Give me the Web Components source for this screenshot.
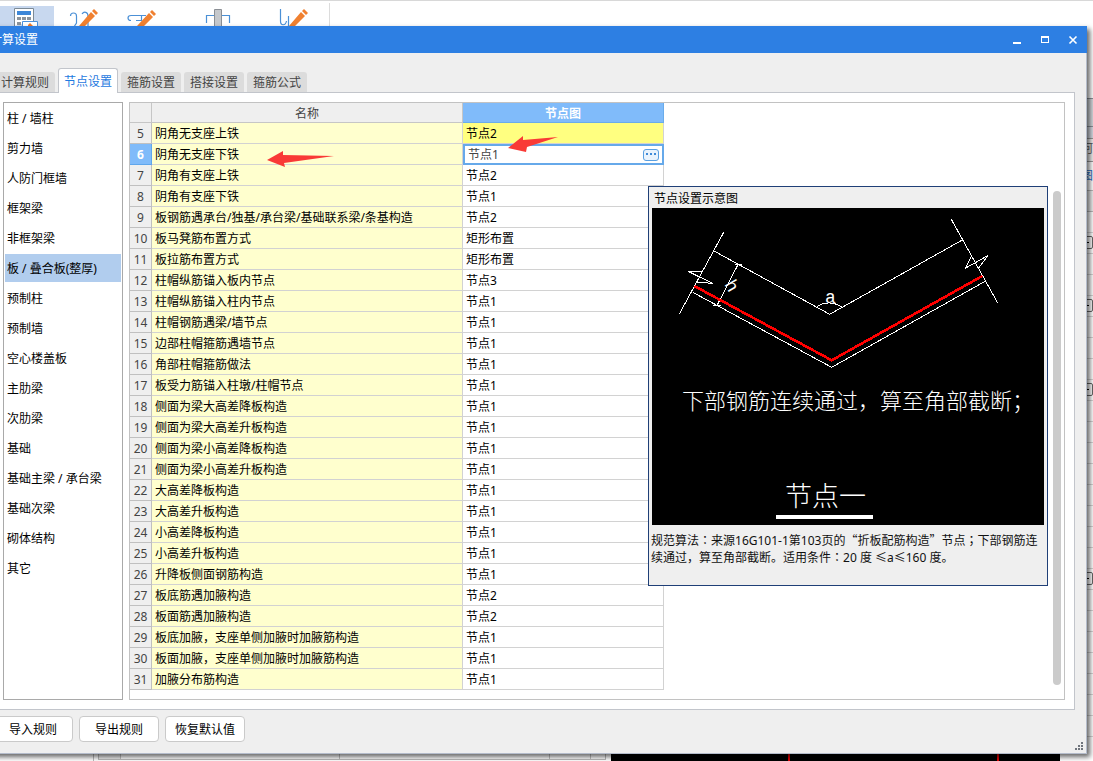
<!DOCTYPE html>
<html lang="zh-CN">
<head>
<meta charset="utf-8">
<title>计算设置</title>
<style>
  body { margin: 0; font: 12px/18px "Noto Sans", "Noto Sans CJK SC", sans-serif; color: #000; overflow: hidden; }
</style>
</head>
<body>
<app-desktop></app-desktop>
<script>
const define = (name, html, setup) => {
  const tpl = document.createElement('template');
  tpl.innerHTML = html;
  customElements.define(name, class extends HTMLElement {
    connectedCallback() {
      if (this.shadowRoot) return;
      const root = this.attachShadow({ mode: 'open' });
      root.append(tpl.content.cloneNode(true));
      if (setup) setup(this, root);
    }
  });
};

/* Ribbon of the main application */
define('app-ribbon', `
<style>
  :host { display: flex; height: 25px; border-top: 1px solid #d8d8d8; background: #fff; }
  svg { display: block; width: 330px; height: 25px; }
</style>
<svg viewBox="0 1 330 25" fill="none" aria-hidden="true">
  <path d="M0 6h54v20H0z" fill="#c8d8ef"/>
  <path d="M14.500 26V8.500H33.500V21" fill="#fff" stroke="#7c8a96"/>
  <path d="M17 11h14v4H17z" fill="#3d87d8"/>
  <path d="M17 17h4v3h-4zM22 17h4v3h-4zM27 17h4v3h-4zM17 22h4v3h-4z" fill="#8c949c"/>
  <path d="M22.500 26v-4.500h15V26" fill="#fff" stroke="#4a90dc"/>
  <path d="M28 25l2-2 3 3h-5z" fill="#f07a28"/>
  <path d="M70.500 16c0-4 6-4 6 0v7l-2 3M82 14c2-3 6-2 6 2v10M140 15.500h-9c-4 0-4 5 0 5M137 15.500h9M141.500 16v5M136 20.500h6M206.500 23v-7.500h23V23M280.500 9v12c0 5 5 5 6 0M288.500 16v10" stroke="#4b90d6" stroke-width="1.200"/>
  <path d="M214.500 26V9.500h7V26" fill="#c5c8cc" stroke="#8b8f95"/>
  <g fill="#f08030"><path d="M79 26l12-14 4 4-10 10zM92 11l2-2 4 4-2 2z"/><path d="M137 26l12-13 4 4-9 9zM150 12l2-2 4 4-2 2zM289 26l12-14 4 4-10 10zM302 11l2-2 4 4-2 2z"/></g>
  <path d="M329.500 3v23" stroke="#dcdcdc"/>
</svg>`);

/* Property grid that shows past the dialog's right edge */
define('side-grid', `
<style>
  :host { display: block; overflow: hidden; background: #fff; }
  .band { height: 27px; margin-top: 72px; background: #d4d9dd; border: solid #8d939b; border-width: 1px 0; }
  .sub { height: 11px; background: #d6dae2; }
  .head { height: 22px; border: solid #999; border-width: 1px 0 1px; background: #eee; color: #666; direction: rtl; white-space: nowrap; line-height: 20px; }
  .blue { color: #2a6fc9; height: 28px; line-height: 28px; direction: rtl; white-space: nowrap; border-bottom: 1px solid #bbb; }
  .gray { height: 20px; background: #efefef; border-bottom: 1px solid #bbb; }
  .lines { height: 570px; background: repeating-linear-gradient(#fff 0 20px, #d5d5d5 20px 21px); position: relative; }
  i { position: absolute; right: 0; width: 6px; height: 11px; border: 1px solid #666; border-radius: 2px; background: #fff linear-gradient(#000, #000) 0 5px / 3px 1px no-repeat; }
</style>
<div class="band"></div><div class="sub"></div>
<div class="head">河</div><div class="blue">图</div><div class="gray"></div>
<div class="lines"><i style="top:24px"></i><i style="top:87px"></i><i style="top:171px"></i><i style="top:360px"></i></div>`);

/* Strip of the main window under the dialog */
define('bottom-strip', `
<style>
  :host { display: flex; height: 14px; background: #fff; overflow: hidden; }
  .edge { width: 93px; border-right: 1px solid #bbb; margin-right: 4px; flex: none; }
  .grid { flex: 0 0 508px; box-sizing: border-box; height: 13px; display: flex; border: solid #bbb; border-width: 0 1px 1px; }
  .grid div { border-right: 1px solid #c4c4c4; box-sizing: border-box; }
  .n { width: 22px; background: #eee; } .name { width: 219px; } .val { width: 210px; } .x { width: 41px; }
  .view { flex: 1; margin: 0 33px 0 5px; background: linear-gradient(#e00000, #e00000) 177px 0 / 2px 100% no-repeat, linear-gradient(#e00000, #e00000) 386px 0 / 2px 100% no-repeat, #000; }
</style>
<div class="edge"></div><div class="grid"><div class="n"></div><div class="name"></div><div class="val"></div><div class="x"></div></div><div class="view"></div>`);

define('title-bar', `
<style>
  :host { display: flex; align-items: center; height: 27px; flex: none; background: #2d7fe3; color: #fff; padding-left: 4px; }
  span { flex: 1; }
  button { width: 28px; height: 27px; padding: 0; border: 0; background: none; color: #fff; }
  svg { display: block; margin: auto; }
</style>
<span><slot></slot></span>
<button aria-label="最小化"><svg width="10" height="10"><path d="M1 7h8v2H1z" fill="currentColor"/></svg></button>
<button aria-label="最大化"><svg width="10" height="10"><path d="M1 1h8v7H1zM2 3v4h6V3z" fill="currentColor" fill-rule="evenodd"/></svg></button>
<button aria-label="关闭"><svg width="10" height="10"><path d="M1.500 1.500l7 7m0-7l-7 7" stroke="currentColor" stroke-width="1.600"/></svg></button>`);

define('tab-strip', `
<style>
  :host { display: flex; align-items: flex-end; gap: 3px; height: 39px; flex: none; padding-left: 9px; position: relative; }
  button { box-sizing: border-box; width: 60px; height: 20px; padding: 1px 0 0; border: 0; border-radius: 3px 3px 0 0; background: #dcdcdc; color: #444; font: inherit; line-height: 19px; white-space: nowrap; }
  button[aria-selected=true] { height: 25px; background: #fff; color: #1f7ae0; border: 1px solid #c2c5cb; border-bottom: 0; margin-bottom: -1px; }
</style>`, (host, root) => {
  host.setAttribute('role', 'tablist');
  host.getAttribute('items').split(',').forEach((t, i) => {
    const b = document.createElement('button');
    b.setAttribute('role', 'tab');
    b.setAttribute('aria-selected', i === 1);
    b.textContent = t;
    root.append(b);
  });
});

define('category-list', `
<style>
  :host { display: block; box-sizing: border-box; width: 120px; flex: none; border: 1px solid #a9a9a9; background: #fff; padding: 1px; }
  ul { margin: 0; padding: 0; list-style: none; display: grid; gap: 2px; }
  li { height: 28px; line-height: 30px; padding-left: 2px; white-space: nowrap; }
  .on { background: #b1cdee; }
</style><ul></ul>`, (host, root) => {
  const ul = root.querySelector('ul');
  host.getAttribute('items').split(',').forEach((t, i) => {
    const li = document.createElement('li');
    li.textContent = t;
    if (i === 5) li.className = 'on';
    ul.append(li);
  });
});

define('node-table', `
<style>
  :host { display: block; }
  table { border-collapse: separate; border-spacing: 0; table-layout: fixed; width: 534px; }
  th, td { box-sizing: border-box; padding: 2px 0 0; height: 21px; line-height: 18px; border: solid #d2d2d2; border-width: 0 1px 1px 0; text-align: left; font-weight: 400; white-space: nowrap; }
  thead th { height: 20px; line-height: 17px; background: #efefef; text-align: center; color: #444; border-color: #c6c6c6; }
  thead .on { background: #80bbfa; color: #fff; font-weight: 700; border-color: #6aaceb; }
  tbody th { background: #efefef; text-align: center; color: #444; border-color: #c0c0c0; }
  tbody td { padding-left: 3px; }
  .name { background: #ffffce; }
  .hot { background: #ffff80; }
  tbody .cur { background: #80bbfa; color: #fff; font-weight: 700; border-color: #5fa6ec; }
  tbody td.edit { padding: 0; border: 0; }
  .box { display: flex; align-items: center; box-sizing: border-box; height: 21px; border: 2px solid #66a9ea; background: #fff; padding: 0 3px; }
  input { flex: 1; min-width: 0; height: 17px; box-sizing: border-box; padding: 0; border: 0; outline: 0; font: inherit; color: #444; background: none; }
  button { display: block; width: 16px; height: 12px; padding: 0; border: 1px solid #5a9fe0; border-radius: 3px; background: #e9f3fd; }
  svg { display: block; margin: auto; }
</style>
<table><colgroup><col style="width:22px"><col style="width:311px"><col style="width:201px"></colgroup>
<thead><tr><th></th><th>名称</th><th class="on">节点图</th></tr></thead><tbody></tbody></table>`, (host, root) => {
  const rows = [['阴角无支座上铁','节点2'],['阴角无支座下铁','节点1'],['阴角有支座上铁','节点2'],['阴角有支座下铁','节点1'],
    ['板钢筋遇承台/独基/承台梁/基础联系梁/条基构造','节点2'],['板马凳筋布置方式','矩形布置'],['板拉筋布置方式','矩形布置'],
    ['柱帽纵筋锚入板内节点','节点3'],['柱帽纵筋锚入柱内节点','节点1'],['柱帽钢筋遇梁/墙节点','节点1'],['边部柱帽箍筋遇墙节点','节点1'],
    ['角部柱帽箍筋做法','节点1'],['板受力筋锚入柱墩/柱帽节点','节点1'],['侧面为梁大高差降板构造','节点1'],['侧面为梁大高差升板构造','节点1'],
    ['侧面为梁小高差降板构造','节点1'],['侧面为梁小高差升板构造','节点1'],['大高差降板构造','节点1'],['大高差升板构造','节点1'],
    ['小高差降板构造','节点1'],['小高差升板构造','节点1'],['升降板侧面钢筋构造','节点1'],['板底筋遇加腋构造','节点2'],['板面筋遇加腋构造','节点2'],
    ['板底加腋，支座单侧加腋时加腋筋构造','节点1'],['板面加腋，支座单侧加腋时加腋筋构造','节点1'],['加腋分布筋构造','节点1']];
  root.querySelector('tbody').innerHTML = rows.map(([n, v], i) => {
    const cur = i === 1;
    const cell = cur
      ? `<td class="edit"><div class="box"><input aria-label="${n}" value="${v}"><button aria-label="选择节点图"><svg width="12" height="3"><path d="M1 0h2v2H1zM5 0h2v2H5zM9 0h2v2H9z" fill="#3f8ad8"/></svg></button></div></td>`
      : `<td${i ? '' : ' class="hot"'}>${v}</td>`;
    return `<tr><th${cur ? ' class="cur"' : ''}>${i + 5}</th><td class="name">${n}</td>${cell}</tr>`;
  }).join('');
});

/* Node diagram popup */
define('node-preview', `
<style>
  :host { display: block; box-sizing: border-box; width: 400px; height: 400px; border: 1px solid #1f3f77; background: #efefef; }
  h2 { margin: 0 0 0 5px; font: inherit; height: 21px; line-height: 23px; }
  svg { display: block; width: 392px; height: 317px; margin-left: 3px; background: #000; }
  text { fill: #fff; font-family: "Noto Sans CJK SC", sans-serif; font-weight: 300; }
  .dim { font-family: "Liberation Mono", monospace; }
  p { margin: 7px 0 0 2px; white-space: nowrap; color: #111; }
  .line { display: block; height: 17px; line-height: 17px; }
  .wide { font-family: "Noto Sans CJK SC", sans-serif; line-height: 1; }
  .mid { font-family: "Noto Sans CJK TC", sans-serif; line-height: 1; }
</style>
<h2>节点设置示意图</h2>
<svg viewBox="0 0 392 317" fill="none" stroke="#fff" role="img" aria-label="节点一">
  <g shape-rendering="crispEdges">
  <path d="M71.700 24.300L27.300 106M62 43L177.700 106.300 310.300 32M299.300 11.300L345.700 95M40.700 84.300L179.700 159.300 333.700 73"/>
  <path d="M50 63.500H36.300L60.700 75.300 43.700 74.300M318.700 49.300L313.300 60.300 335.700 47.700 326.700 60"/>
  <path d="M86.300 56L65 97.500M83 56.500h7M61 97.500h8M164.700 98.700Q177 91 189.700 99"/>
  <path d="M42.300 78L179.700 152.300 330.300 68" stroke="#f00" stroke-width="2.600"/>
  </g>
  <g stroke="none">
  <text class="dim" x="173" y="95" font-size="18">a</text>
  <text class="dim" transform="translate(72 76) rotate(60)" font-size="18">h</text>
  <text x="30" y="201" font-size="22">下部钢筋连续通过，算至角部截断；</text>
  <text x="133" y="298" font-size="27">节点一</text>
  <path d="M124 307h97v4h-97z" fill="#fff"/>
  </g>
</svg>
<p><span class="line">规范算法<span class="mid" lang="zh-TW">：</span>来源16G101-1第103页的<span class="wide">“</span>折板配筋构造<span class="wide">”</span>节点<span class="mid" lang="zh-TW">；</span>下部钢筋连</span><span class="line">续通过，算至角部截断。适用条件<span class="mid" lang="zh-TW">：</span>20 度 ≤a≤160 度。</span></p>`);

define('note-arrow', `
<style>:host { display: block; } svg { display: block; }</style>
<svg width="68" height="18" fill="#f93a36" aria-hidden="true"><path/></svg>`, (host, root) => {
  root.querySelector('path').setAttribute('d', host.getAttribute('shape'));
});

define('settings-dialog', `
<style>
  :host { display: flex; flex-direction: column; box-sizing: border-box; background: #efefef; border: solid #b4bccb; border-width: 0 1px 1px 0; box-shadow: 3px 3px 5px rgba(0,0,0,.6); }
  title-bar { margin-right: -1px; }
  .pane { flex: 1; min-height: 0; display: flex; gap: 6px; margin-right: 11px; padding: 9px 9px 9px 17px; background: #fff; border: solid #c2c5cb; border-width: 1px 1px 1px 0; }
  .board { flex: 1; min-width: 0; position: relative; border: 1px solid #c2c2c2; background: #fff; }
  .thumb { position: absolute; right: 3px; top: 88px; bottom: 14px; width: 8px; border-radius: 4px; background: #cbcbcb; }
  node-preview { position: absolute; right: 16px; top: 83px; }
  note-arrow { position: absolute; }
  .a1 { left: 137px; top: 48px; }
  .a2 { left: 378px; top: 32px; }
  footer { position: relative; display: flex; gap: 6px; height: 43px; flex: none; align-items: center; padding-left: 7px; box-sizing: border-box; padding-bottom: 5px; }
  footer button { box-sizing: border-box; width: 80px; height: 26px; padding: 1px 0 0; border: 1px solid #cacaca; border-radius: 4px; background: #fff; font: inherit; color: #000; }
  .grip { position: absolute; right: 2px; bottom: 2px; }
</style>
<title-bar>计算设置</title-bar>
<tab-strip items="计算规则,节点设置,箍筋设置,搭接设置,箍筋公式"></tab-strip>
<div class="pane">
  <category-list items="柱 / 墙柱,剪力墙,人防门框墙,框架梁,非框架梁,板 / 叠合板(整厚),预制柱,预制墙,空心楼盖板,主肋梁,次肋梁,基础,基础主梁 / 承台梁,基础次梁,砌体结构,其它"></category-list>
  <div class="board">
    <node-table></node-table>
    <div class="thumb"></div>
    <node-preview></node-preview>
    <note-arrow class="a1" shape="M0 9L16 0V4L67 5 17 12 18 16z"></note-arrow>
    <note-arrow class="a2" shape="M0 13L15 1V5L50 2 19 12 18 17z"></note-arrow>
  </div>
</div>
<footer><button>导入规则</button><button>导出规则</button><button>恢复默认值</button>
<svg class="grip" width="9" height="9" fill="#6f747c" aria-hidden="true"><path d="M6 0h2v2H6zM3 3h2v2H3zM6 3h2v2H6zM0 6h2v2H0zM3 6h2v2H3zM6 6h2v2H6z"/></svg></footer>`);

define('app-desktop', `
<style>
  :host { display: flex; flex-direction: column; height: 100vh; position: relative; overflow: hidden; background: #fff; }
  .mid { flex: 1; min-height: 0; display: flex; justify-content: flex-end; overflow: hidden; }
  side-grid { width: 14px; }
  settings-dialog { position: absolute; left: -14px; right: 6px; top: 26px; bottom: 7px; }
</style>
<app-ribbon></app-ribbon>
<div class="mid"><side-grid></side-grid></div>
<bottom-strip></bottom-strip>
<settings-dialog></settings-dialog>`);
</script>
</body>
</html>
